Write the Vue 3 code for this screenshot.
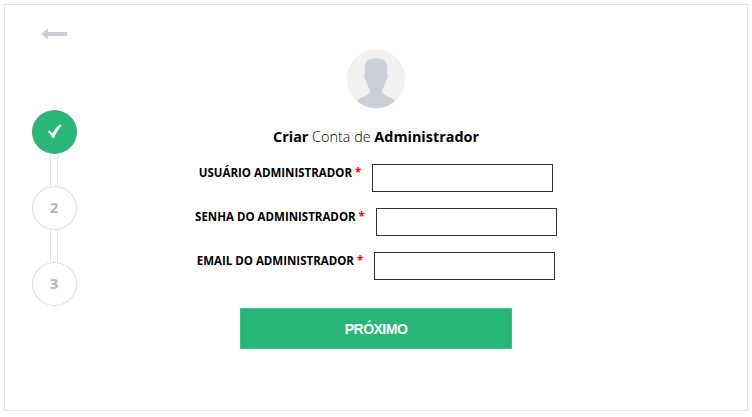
<script setup>
import { ref } from 'vue';

const currentStep = ref(1);
const steps = [1, 2, 3];

const fields = ref([
    { id: 'user', label: 'USUÁRIO ADMINISTRADOR', type: 'text', value: '' },
    { id: 'password', label: 'SENHA DO ADMINISTRADOR', type: 'password', value: '' },
    { id: 'email', label: 'EMAIL DO ADMINISTRADOR', type: 'email', value: '' },
]);

const next = () => {
    if (currentStep.value < steps.length) {
        currentStep.value++;
    }
};

const back = () => {
    if (currentStep.value > 1) {
        currentStep.value--;
    }
};
</script>

<template>
    <div class="wizard">
        <aside class="sidebar">
            <button class="back" type="button" aria-label="Voltar" @click="back">
                <svg width="26" height="12" viewBox="0 0 26 12">
                    <path d="M0.5 6 L7 0.3 V4 H26 V8 H7 V11.7 Z" fill="#cbd0d8" />
                </svg>
            </button>
            <ol class="steps">
                <li v-for="step in steps" :key="step" class="step" :class="{ done: step <= currentStep }">
                    <svg v-if="step <= currentStep" width="15" height="15" viewBox="0 0 15 15">
                        <path d="M0.7 7.6 L2.7 6.4 L5.4 9.2 Q8.3 3.8 12.6 0.5 L14.8 1.5 Q10.3 6 7 14 H5.6 Q3.6 10.3 0.7 7.6 Z" fill="#fff" />
                    </svg>
                    <span v-else>{{ step }}</span>
                </li>
            </ol>
        </aside>

        <form class="content" @submit.prevent="next">
            <svg class="avatar" width="60" height="60" viewBox="0 0 60 60">
                <clipPath id="avatar-clip">
                    <circle cx="30" cy="29.8" r="29.4" />
                </clipPath>
                <circle cx="30" cy="29.8" r="29.4" fill="#f1f1f1" />
                <path
                    clip-path="url(#avatar-clip)"
                    fill="#cbd0d8"
                    d="M30 9.3 C36 9.3 40.6 11.5 40.9 15.5 L41 24 C42.3 24.3 41.8 30 40 31.5 C39.3 36 38 37.8 36.3 40 V44 C39 47 46.5 49 51 52 V60 H9 V52 C13.5 49 21 47 23.7 44 V40 C22 37.8 20.7 36 20 31.5 C18.2 30 17.7 24.3 19 24 L19.1 15.5 C19.4 11.5 24 9.3 30 9.3 Z"
                />
            </svg>
            <h1 class="title"><b>Criar</b> Conta de <b>Administrador</b></h1>

            <div v-for="field in fields" :key="field.id" class="field">
                <label :for="field.id">{{ field.label }} <span class="required">*</span></label>
                <input :id="field.id" v-model="field.value" :type="field.type" />
            </div>

            <button class="next" type="submit">PRÓXIMO</button>
        </form>
    </div>
</template>

<style>
    body {
        background: #fff;
    }
</style>

<style scoped>
    .wizard {
        box-sizing: border-box;
        display: grid;
        grid-template-columns: 98px 1fr 98px;
        width: 744px;
        height: 407px;
        margin: 4px;
        border: 1px solid #e4e4e4;
        font-family: "Open Sans", sans-serif;
    }

    .sidebar {
        display: flex;
        flex-direction: column;
        align-items: center;
        padding-top: 23px;
    }

    .back {
        display: flex;
        padding: 0;
        border: none;
        background: none;
    }

    .steps {
        display: flex;
        flex-direction: column;
        gap: 32px;
        margin: 69.5px 0 0;
        padding: 0;
        list-style: none;
    }

    .step {
        box-sizing: border-box;
        position: relative;
        display: flex;
        justify-content: center;
        align-items: center;
        width: 45px;
        height: 44px;
        border: 1px solid #dedede;
        border-radius: 50%;
        color: #b4b5bb;
        font-size: 15px;
        font-weight: 700;
    }

    .step span {
        padding-bottom: 1px;
    }

    .step.done {
        border-color: #4aa57e;
        background: #28b779;
    }

    /* double line between two circles */
    .step:not(:last-child)::after {
        content: "";
        box-sizing: border-box;
        position: absolute;
        top: 42px;
        left: 17px;
        width: 8px;
        height: 33px;
        border: solid #e2e2e2;
        border-width: 0 1px;
    }

    .content {
        display: flex;
        flex-direction: column;
        align-items: center;
        padding-top: 44px;
    }

    .title {
        margin: 17px 0 16px;
        font-size: 14.4px;
        font-weight: 300;
        line-height: 22px;
        white-space: nowrap;
    }

    .title b {
        font-weight: 700;
    }

    .field {
        display: flex;
        align-items: flex-start;
        height: 28px;
        margin-bottom: 16px;
    }

    label {
        margin-right: 11px;
        font-size: 11.5px;
        font-weight: 700;
        line-height: 18px;
        white-space: nowrap;
    }

    .required {
        color: #f00;
    }

    input {
        box-sizing: border-box;
        width: 181px;
        height: 28px;
        padding: 0 6px;
        border: 1px solid #333;
        background: #fff;
    }

    .next {
        width: 272px;
        height: 41px;
        margin-top: 12px;
        padding: 0;
        border: 1px solid #3fbf88;
        background: #28b779;
        color: #fff;
        font-family: "Liberation Sans", Arial, sans-serif;
        font-size: 14px;
        font-weight: 700;
        letter-spacing: -0.5px;
    }
</style>
